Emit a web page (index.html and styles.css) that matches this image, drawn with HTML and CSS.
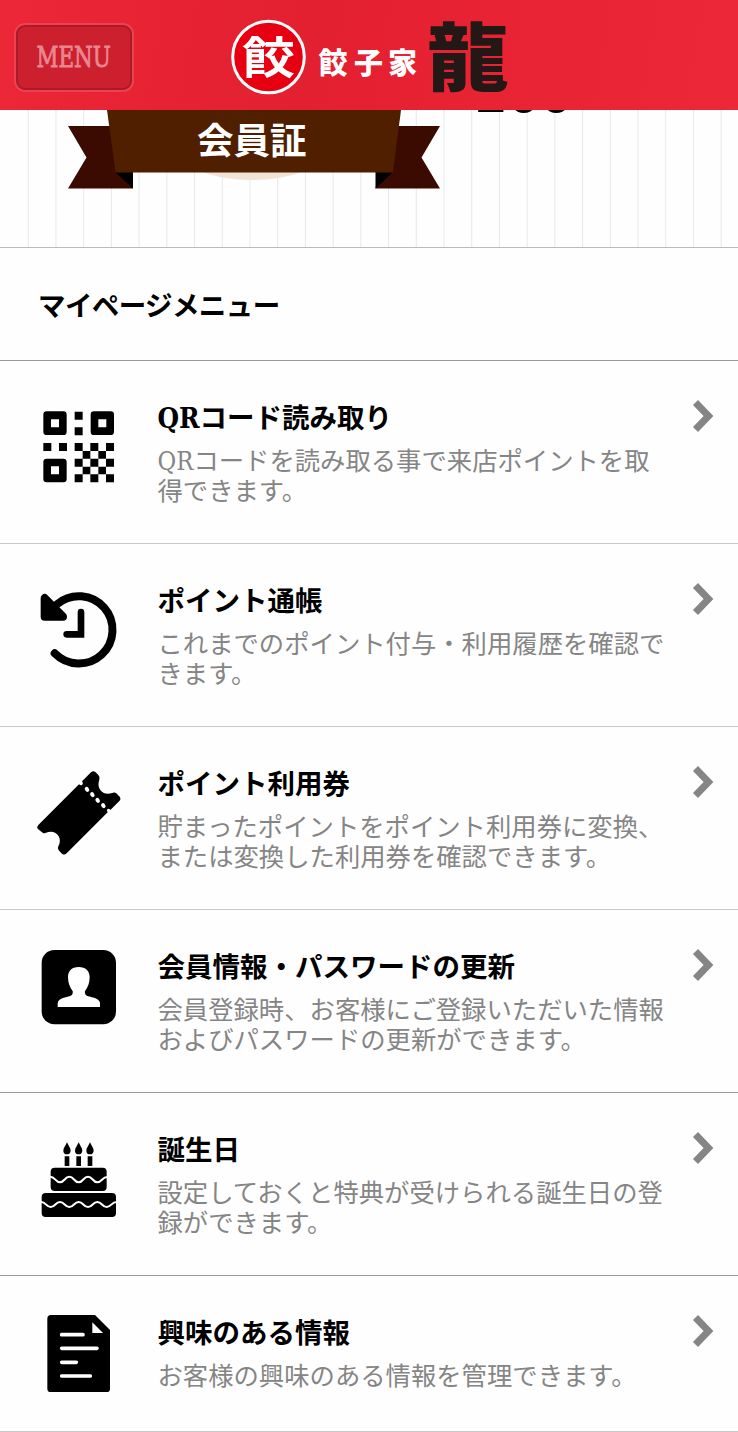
FILE: index.html
```html
<!DOCTYPE html>
<html lang="ja">
<head>
    <meta charset="UTF-8">
    <meta name="viewport" content="width=device-width, initial-scale=1.0">
    <title>餃子家 龍</title>
    <link rel="stylesheet" href="styles.css">
</head>
<body>
    <header class="header">
        <button class="menu-button" type="button"><span>MENU</span></button>
        <svg class="logo" width="284" height="84" viewBox="228 14 284 84">
            <circle cx="268.5" cy="57" r="35.8" fill="#e60012" stroke="#fff" stroke-width="3"/>
            <text class="logo-mark" transform="translate(242 73.500) scale(1 0.84)">餃</text>
            <text class="logo-name" x="318.500 354 388" y="74">餃子家</text>
            <text class="logo-dragon" transform="translate(427 85) scale(1 0.9)">龍</text>
        </svg>
    </header>

    <main>
        <section class="member-card">
            <svg class="ribbon" width="374" height="80" viewBox="67 110 374 80">
                <ellipse cx="252" cy="150" rx="72" ry="30" fill="#f2e3d5"/>
                <path d="M68 126H125L133 188.500H68L86.500 157.500Z" fill="#3b0a00"/>
                <path d="M440 126H385L375.500 188.500H440L421.500 157.500Z" fill="#3b0a00"/>
                <path d="M115 172H133V188.500ZM393 172H375.500V188.500Z" fill="#000"/>
                <path d="M107 110H401L393 172.500H115.500Z" fill="#4f1f00"/>
                <text class="ribbon-text" x="197" y="153.500">会員証</text>
            </svg>
            <p class="points">200</p>
        </section>

        <h2 class="section-title">マイページメニュー</h2>

        <ul class="menu-list">
            <li class="menu-item">
                <svg class="icon" viewBox="42 6 270 300">
                    <path fill-rule="evenodd" d="M80 64H130Q140 64 140 74V125Q140 135 130 135H80Q70 135 70 125V74Q70 64 80 64ZM93 88V112H117V88ZM222 64H272Q282 64 282 74V125Q282 135 272 135H222Q212 135 212 125V74Q212 64 222 64ZM235 88V112H259V88ZM80 206H130Q140 206 140 216V267Q140 277 130 277H80Q70 277 70 267V216Q70 206 80 206ZM93 229V253H117V229Z"/>
                    <path d="M164 65h24v24h-24zM164 112h24v24h-24zM70 159h24v24h-24zM117 159h24v24h-24zM164 159h24v24h-24zM211 159h24v24h-24zM258 159h24v24h-24zM188 183h23v23h-23zM235 183h23v23h-23zM164 206h24v24h-24zM211 206h24v24h-24zM258 206h24v24h-24zM188 230h23v23h-23zM235 230h23v23h-23zM164 253h24v24h-24zM211 253h24v24h-24zM258 253h24v24h-24z"/>
                </svg>
                <div class="menu-text">
                    <h3><span class="latin">QR</span>コード読み取り</h3>
                    <p><span class="latin">QR</span>コードを読み取る事で来店ポイントを取得できます。</p>
                </div>
                <svg class="arrow" viewBox="0 0 22 34"><path d="M3.500 3.500L16.500 17L3.500 30.500"/></svg>
            </li>
            <li class="menu-item">
                <svg class="icon" viewBox="42 15 270 300">
                    <path d="M112 102A101 101 0 1 1 104 250" fill="none" stroke="#000" stroke-width="24" stroke-linecap="round"/>
                    <path d="M183 126V193H140" fill="none" stroke="#000" stroke-width="20" stroke-linecap="round"/>
                    <path d="M74 84V140H129Z" stroke="#000" stroke-width="24" stroke-linejoin="round"/>
                </svg>
                <div class="menu-text">
                    <h3>ポイント通帳</h3>
                    <p>これまでのポイント付与・利用履歴を確認できます。</p>
                </div>
                <svg class="arrow" viewBox="0 0 22 34"><path d="M3.500 3.500L16.500 17L3.500 30.500"/></svg>
            </li>
            <li class="menu-item">
                <svg class="icon" viewBox="42 24 270 300">
                    <path d="M213 67Q220 61 227 67L235 75Q241 81 238 89C228 116 249 138 276 129Q284 125 289 130L299 140Q304 147 298 153L271 180Q267 174 262 178Q259 181 263 187L140 310Q133 317 126 311L116 301Q111 296 115 289C130 263 107 236 78 248Q71 252 66 247L53 236Q49 231 55 225L177 103Q183 108 187 104Q191 99 186 94Z"/>
                    <g fill="#fff">
                        <ellipse cx="201" cy="118" rx="6" ry="8" transform="rotate(-35 201 118)"/>
                        <ellipse cx="217" cy="134" rx="6" ry="8" transform="rotate(-35 217 134)"/>
                        <ellipse cx="233" cy="151" rx="6" ry="8" transform="rotate(-35 233 151)"/>
                        <ellipse cx="250" cy="167" rx="6" ry="8" transform="rotate(-35 250 167)"/>
                    </g>
                </svg>
                <div class="menu-text">
                    <h3>ポイント利用券</h3>
                    <p>貯まったポイントをポイント利用券に変換、または変換した利用券を確認できます。</p>
                </div>
                <svg class="arrow" viewBox="0 0 22 34"><path d="M3.500 3.500L16.500 17L3.500 30.500"/></svg>
            </li>
            <li class="menu-item">
                <svg class="icon" viewBox="42 33 270 300">
                    <rect x="65" y="60" width="223" height="223" rx="38"/>
                    <path fill="#fff" d="M176 111C155 111 144 123 144 142C144 160 150 173 158 183C160 195 153 198 140 201Q113 206 113 220V231H240V220Q240 206 213 201C200 198 193 195 195 183C203 173 209 160 209 142C209 123 197 111 176 111Z"/>
                </svg>
                <div class="menu-text">
                    <h3>会員情報・パスワードの更新</h3>
                    <p>会員登録時、お客様にご登録いただいた情報およびパスワードの更新ができます。</p>
                </div>
                <svg class="arrow" viewBox="0 0 22 34"><path d="M3.500 3.500L16.500 17L3.500 30.500"/></svg>
            </li>
            <li class="menu-item">
                <svg class="icon" viewBox="42 12 270 300">
                    <path d="M141 67C145 77 152 84 152 92Q151 103 141 103Q130 103 130 92C130 84 137 77 141 67ZM176 67C180 77 187 84 187 92Q186 103 176 103Q165 103 165 92C165 84 172 77 176 67ZM210 67C214 77 221 84 221 92Q220 103 210 103Q199 103 199 92C199 84 206 77 210 67Z"/>
                    <path d="M134 109h14v29h-14zM169 109h14v29h-14zM203 109h14v29h-14z"/>
                    <rect x="92" y="143" width="168" height="70" rx="12"/>
                    <rect x="65" y="219" width="223" height="72" rx="12"/>
                    <g fill="none" stroke="#fff" stroke-width="6">
                        <path d="M90 170C106 170 106 187 120 187S134 170 148 170S162 187 176 187S190 170 204 170S218 187 232 187S246 171 262 171"/>
                        <path d="M63 246C79 246 78 261 92 261S106 246 120 246S134 261 148 261S162 246 176 246S190 261 204 261S218 246 232 246S246 261 260 261S274 246 290 246"/>
                    </g>
                </svg>
                <div class="menu-text">
                    <h3>誕生日</h3>
                    <p>設定しておくと特典が受けられる誕生日の登録ができます。</p>
                </div>
                <svg class="arrow" viewBox="0 0 22 34"><path d="M3.500 3.500L16.500 17L3.500 30.500"/></svg>
            </li>
            <li class="menu-item">
                <svg class="icon" viewBox="42 36 270 300">
                    <path d="M93 60H225L270 105V281Q270 291 260 291H92Q82 291 82 281V71Q82 60 93 60Z"/>
                    <path d="M217 82V114H249Z" fill="#fff"/>
                    <path d="M125 119H189M125 160H231M125 202H169M125 243H211" stroke="#fff" stroke-width="11" stroke-linecap="round"/>
                </svg>
                <div class="menu-text">
                    <h3>興味のある情報</h3>
                    <p>お客様の興味のある情報を管理できます。</p>
                </div>
                <svg class="arrow" viewBox="0 0 22 34"><path d="M3.500 3.500L16.500 17L3.500 30.500"/></svg>
            </li>
        </ul>
    </main>
</body>
</html>
```
FILE: styles.css
```css
* {
    box-sizing: border-box;
}
body {
    margin: 0;
    background: #fefefe;
    color: #000;
    font-family: "Noto Sans CJK JP", sans-serif;
}
h2, h3, p, ul {
    margin: 0;
    padding: 0;
}
.header {
    position: fixed; /* stays over the card while scrolling */
    top: 0;
    left: 0;
    z-index: 10;
    width: 100%;
    height: 110px;
    display: flex;
    align-items: flex-start;
    padding: 14px 0 0 16px;
    background: linear-gradient(100deg, #ec2737 0%, #e32030 42%, #e72232 60%, #ec2737 100%);
}
.menu-button {
    width: 116px;
    height: 65px;
    margin-top: 11px;
    padding: 0;
    border: 2px solid #a91b28;
    border-radius: 9px;
    background: #cc202e;
    box-shadow: 0 0 0 2px #ee4150;
    color: #e98791;
    font-family: "DejaVu Serif Condensed", "DejaVu Serif", serif;
    font-stretch: condensed;
    font-size: 28px;
    -webkit-text-stroke: 0.8px #e98791;
}
.menu-button span {
    display: inline-block;
    margin: 0 -10px;
    transform: scaleX(0.85);
}
.logo {
    margin-left: 96px;
}
.logo-mark {
    fill: #fff;
    font-size: 53px;
    font-weight: 700;
}
.logo-name {
    fill: #fff;
    font-size: 29px;
    font-weight: 900;
}
.logo-dragon {
    fill: #231815;
    font-size: 82px;
    font-weight: 900;
}
.member-card {
    display: flex;
    align-items: flex-start;
    height: 248px;
    padding: 110px 0 0 67px;
    border-bottom: 1px solid #bbb;
    background:
        linear-gradient(#fefefe, #fefefe) 0 0 / 10px 100% no-repeat,
        linear-gradient(90deg, transparent 26.500px, #e8e8e7 26.500px) 1px 0 / 27.730px 100%;
    overflow: hidden;
}
.ribbon-text {
    fill: #fff;
    font-size: 36.500px;
    font-weight: 700;
}
.points {
    margin: -44px 0 0 34px;
    font-family: "DejaVu Serif Condensed", "DejaVu Serif", serif;
    font-stretch: condensed;
    font-size: 52px;
    font-weight: 700;
    line-height: 56px;
}
.section-title {
    height: 113px;
    padding: 0 38px;
    border-bottom: 1px solid #999;
    font-size: 27.500px;
    font-weight: 700;
    letter-spacing: -0.600px;
    line-height: 112px;
}
.menu-list {
    list-style: none;
}
.menu-item {
    display: flex;
    align-items: flex-start;
    height: 183px;
    padding-left: 34px;
    border-bottom: 1px solid #c8c8c8;
}
.menu-item:nth-child(4), .menu-item:nth-child(5) {
    border-bottom-color: #999;
}
.menu-item:last-child {
    height: 156px;
}
.icon {
    flex: none;
    width: 90px;
    height: 100px;
    margin-top: 31px;
}
.menu-text {
    width: 514px;
    margin: 40px 0 0 33.500px;
}
.menu-text h3 {
    font-size: 27.500px;
    font-weight: 700;
    line-height: 31px;
}
.menu-text p {
    margin-top: 12px;
    color: #858585;
    font-size: 25.350px;
    font-weight: 400;
    line-height: 30px;
}
.latin {
    font-family: "DejaVu Serif Condensed", "DejaVu Serif", serif;
    font-stretch: condensed;
    line-height: 0;
}
.arrow {
    width: 22px;
    height: 34px;
    margin: 38px 0 0 20px;
    fill: none;
    stroke: #858585;
    stroke-width: 7;
}
```
